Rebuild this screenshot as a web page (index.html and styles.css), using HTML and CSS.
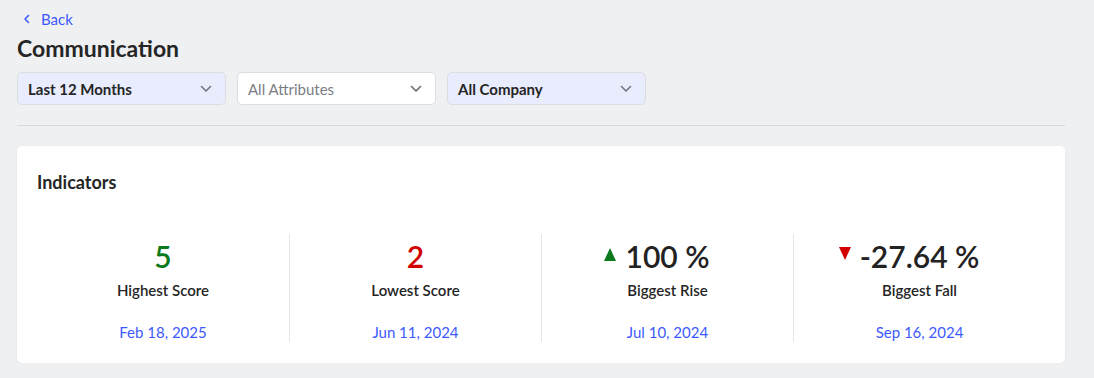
FILE: index.html
```html
<!DOCTYPE html>
<html lang="en">
<head>
    <meta charset="UTF-8">
    <meta name="viewport" content="width=device-width, initial-scale=1.0">
    <title>Communication</title>
    <link rel="stylesheet" href="styles.css">
</head>
<body>
    <div class="page">
        <a class="back" href="#">
            <svg width="10" height="10" viewBox="0 0 10 10"><path d="M6.5 1.5 3 5l3.5 3.5" fill="none" stroke="currentColor" stroke-width="1.6" stroke-linecap="round" stroke-linejoin="round"/></svg>
            <span>Back</span>
        </a>
        <h1>Communication</h1>
        <div class="filters">
            <div class="select selected wide">
                <span>Last 12 Months</span>
                <svg width="12" height="8" viewBox="0 0 12 8"><path d="M1.5 1.5 6 6l4.5-4.5" fill="none" stroke="currentColor" stroke-width="1.6" stroke-linecap="round" stroke-linejoin="round"/></svg>
            </div>
            <div class="select">
                <span class="placeholder">All Attributes</span>
                <svg width="12" height="8" viewBox="0 0 12 8"><path d="M1.5 1.5 6 6l4.5-4.5" fill="none" stroke="currentColor" stroke-width="1.6" stroke-linecap="round" stroke-linejoin="round"/></svg>
            </div>
            <div class="select selected">
                <span>All Company</span>
                <svg width="12" height="8" viewBox="0 0 12 8"><path d="M1.5 1.5 6 6l4.5-4.5" fill="none" stroke="currentColor" stroke-width="1.6" stroke-linecap="round" stroke-linejoin="round"/></svg>
            </div>
        </div>
        <hr>
        <div class="card">
            <h2>Indicators</h2>
            <div class="stats">
                <div class="stat">
                    <div class="value good">5</div>
                    <div class="label">Highest Score</div>
                    <div class="date">Feb 18, 2025</div>
                </div>
                <div class="stat">
                    <div class="value bad">2</div>
                    <div class="label">Lowest Score</div>
                    <div class="date">Jun 11, 2024</div>
                </div>
                <div class="stat">
                    <div class="value"><span class="tri up"></span>100 %</div>
                    <div class="label">Biggest Rise</div>
                    <div class="date">Jul 10, 2024</div>
                </div>
                <div class="stat">
                    <div class="value"><span class="tri down"></span>-27.64 %</div>
                    <div class="label">Biggest Fall</div>
                    <div class="date">Sep 16, 2024</div>
                </div>
            </div>
        </div>
    </div>
</body>
</html>
```

FILE: styles.css
```css
body {
    margin: 0;
    background: #eff0f2;
    font-family: Lato, "Noto Sans", sans-serif;
    color: #252525;
}
.page {
    padding: 9px 29px 0 17px;
}
.back {
    display: flex;
    align-items: center;
    gap: 9px;
    padding-left: 5px;
    color: #3d5afe;
    text-decoration: none;
    font-size: 15px;
    line-height: 20px;
}
h1 {
    margin: 4px 0 0;
    font-size: 23px;
    font-weight: 700;
    line-height: 30px;
}
.filters {
    display: flex;
    gap: 11px;
    margin-top: 9px;
}
.select {
    box-sizing: border-box;
    width: 199px;
    height: 33px;
    display: flex;
    align-items: center;
    justify-content: space-between;
    padding: 0 13px 0 10px;
    background: #fff;
    border: 1px solid #dcdde1;
    border-radius: 5px;
    font-size: 15px;
    color: #666a70;
}
.select.wide {
    width: 209px;
}
.select.selected {
    background: #e9ecfd;
    color: #727680;
}
.select.selected span {
    color: #252525;
    font-weight: 700;
}
.placeholder {
    color: #7a7d83;
}
hr {
    margin: 20px 0 0;
    border: none;
    border-top: 1px solid #d8d9dc;
}
.card {
    margin-top: 20px;
    background: #fff;
    border-radius: 5px;
    box-shadow: 0 1px 3px rgba(0, 0, 0, 0.06);
    padding: 24px 20px 21px;
}
h2 {
    margin: 0;
    font-size: 18px;
    font-weight: 700;
    line-height: 24px;
}
.stats {
    display: grid;
    grid-template-columns: repeat(4, 1fr);
    margin-top: 40px;
}
.stat {
    display: flex;
    flex-direction: column;
    align-items: center;
    border-left: 1px solid #e4e5e8;
}
.stat:first-child {
    border-left: none;
}
.value {
    position: relative;
    font-size: 30px;
    font-weight: 600;
    line-height: 44px;
    color: #222;
}
.value.good {
    color: #0b7a1c;
}
.value.bad {
    color: #d40000;
}
.tri {
    position: absolute;
    right: 100%;
    margin-right: 9px;
    width: 0;
    height: 0;
    border-left: 6px solid transparent;
    border-right: 6px solid transparent;
}
.tri.up {
    top: 14px;
    border-bottom: 13px solid #0b7a1c;
}
.tri.down {
    top: 13px;
    border-top: 13px solid #d40000;
}
.label {
    font-size: 15px;
    font-weight: 600;
    line-height: 20px;
    margin-top: 2px;
}
.date {
    font-size: 15px;
    color: #3d5afe;
    line-height: 20px;
    margin-top: 22px;
}
```
